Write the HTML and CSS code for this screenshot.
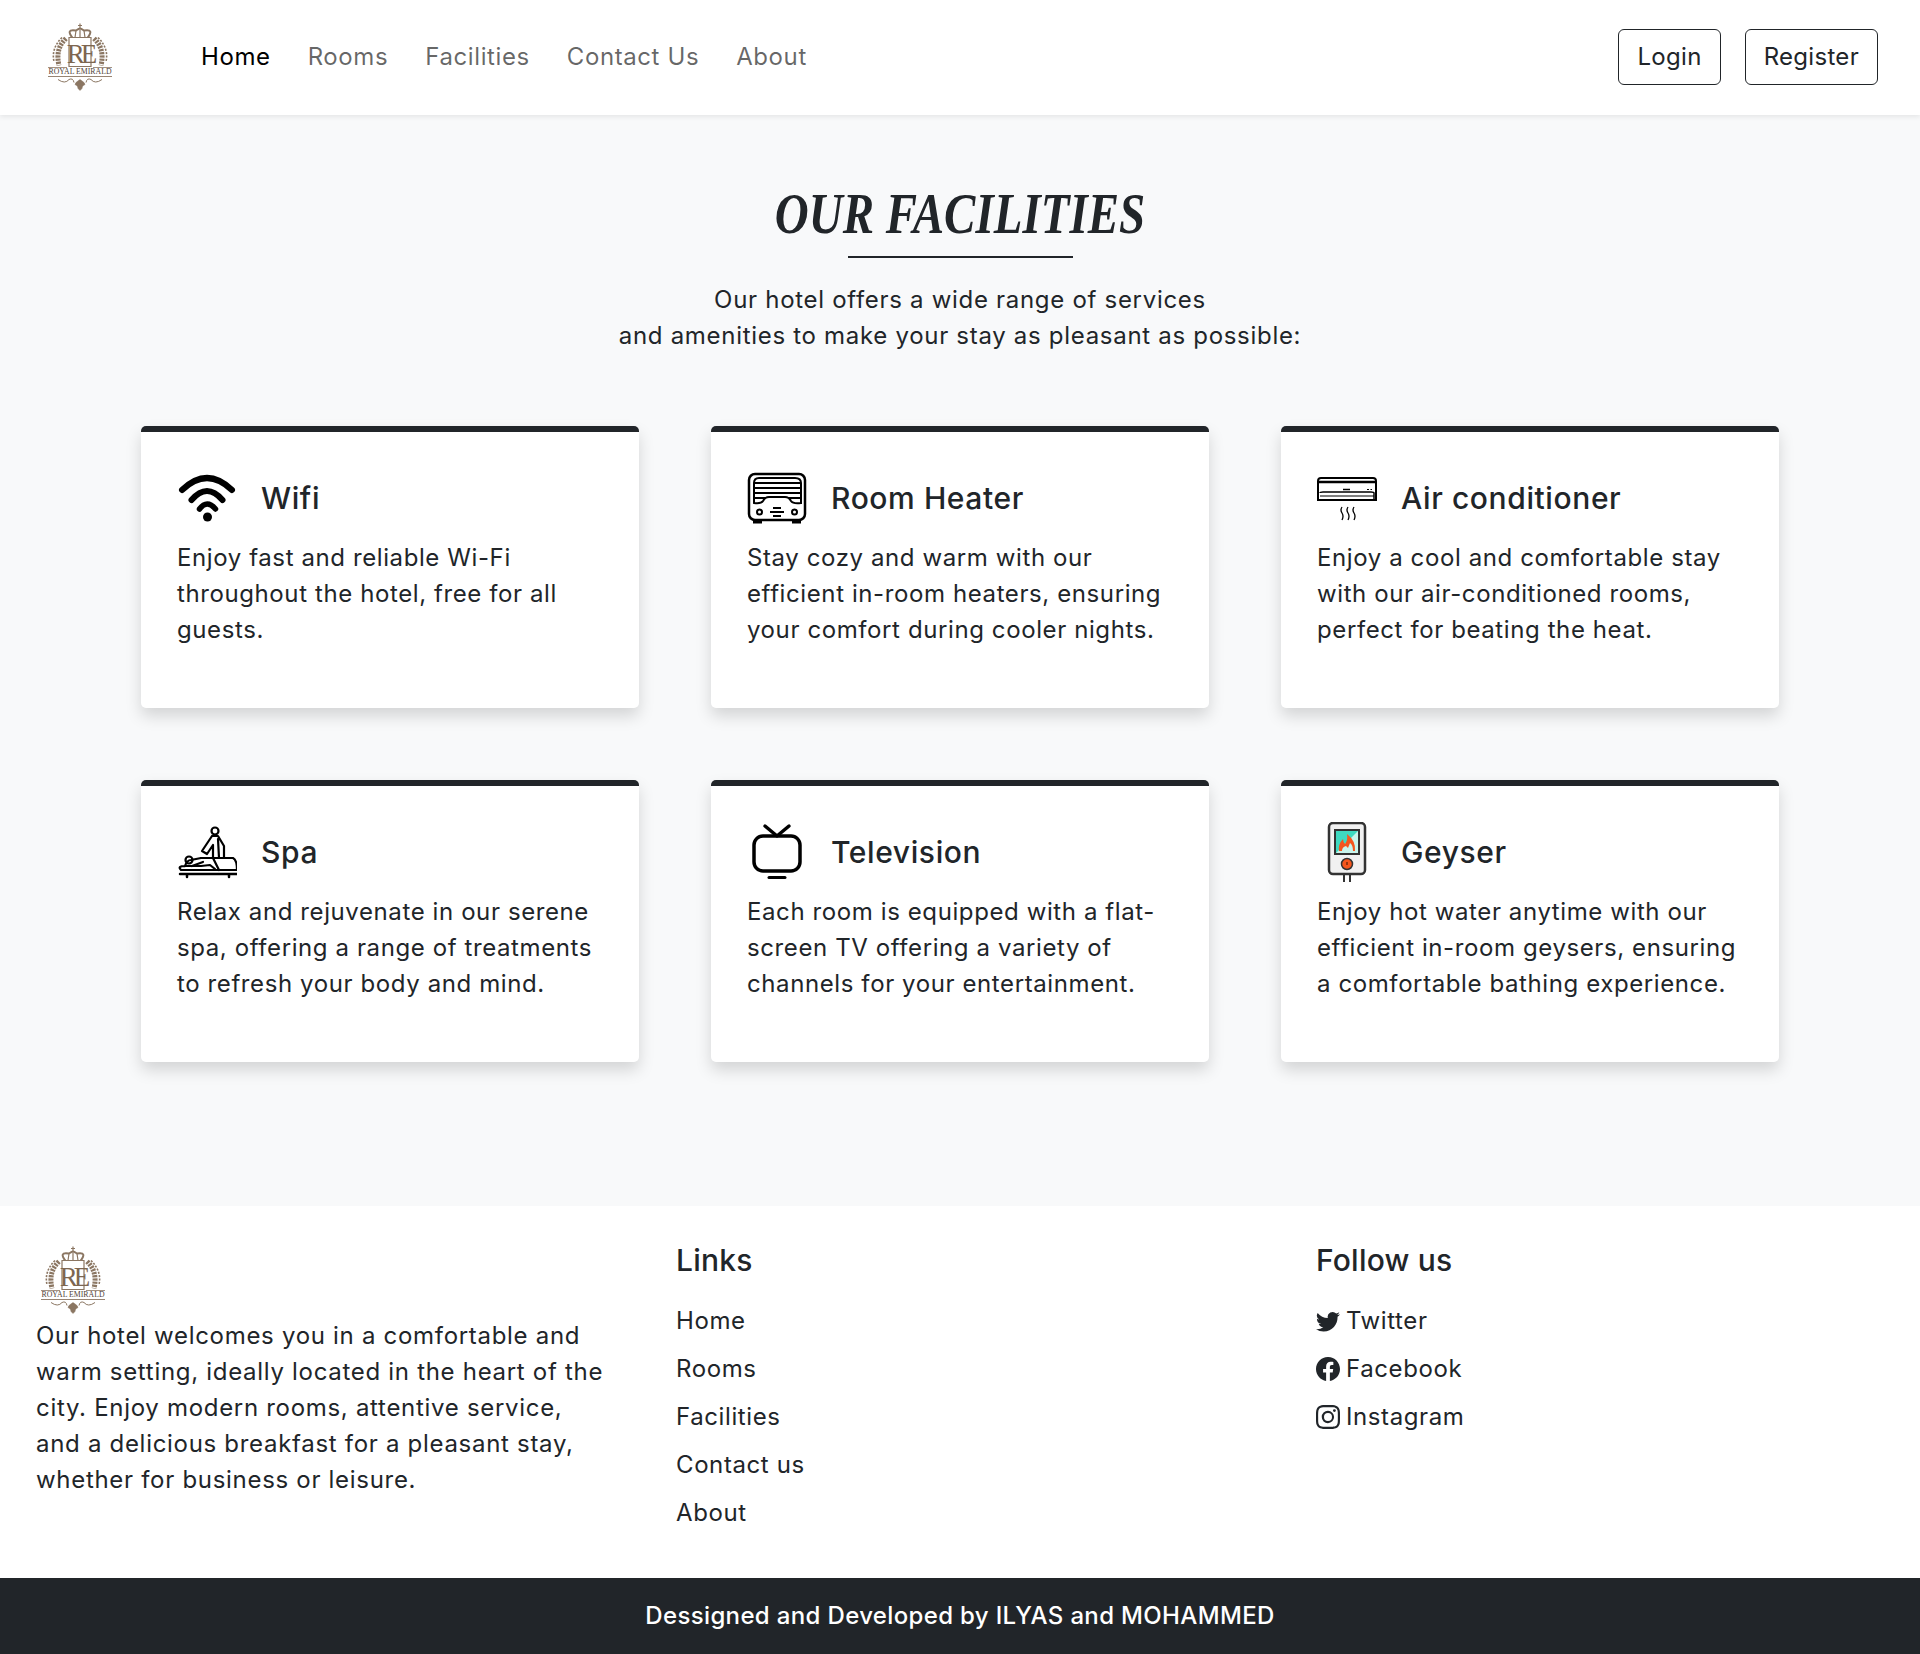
FILE: index.html
```html
<!DOCTYPE html>
<html lang="en">
<head>
<meta charset="utf-8">
<title>Royal Emirald - Facilities</title>
<link rel="stylesheet" href="styles.css">
</head>
<body>
<svg class="defs" width="0" height="0" aria-hidden="true">
  <symbol id="logo-art" viewBox="0 0 74 75">
    <g fill="none" stroke="#8b7662">
      <path d="M37 4 V10 M35 6 H39" stroke-width="1.200"/>
      <path d="M30 19 Q22 9 33 11 Q36 9 37 9 Q38 9 41 11 Q52 9 44 19 Z" fill="#fff" stroke-width="2"/>
      <path d="M33 11 L32 18 M41 11 L42 18 M37 10 V18" stroke-width="1.200"/>
      <path d="M29 18.500 H45" stroke-width="1.500"/>
      <path d="M26 18 H48 V47 H26 Z" stroke-width="1.200" fill="#fff"/>
      <path d="M23 19 Q12 29 16 46 M51 19 Q62 29 58 46" stroke-width="5" stroke-dasharray="2.200 1"/>
      <path d="M19 18 Q8 29 11 42 M55 18 Q66 29 63 42" stroke-width="1.600" stroke-dasharray="2 1.400"/>
      <path d="M5 48 H24 M50 48 H69" stroke-width=".8"/>
      <path d="M5 57 H69" stroke-width=".9"/>
      <path d="M15 60 Q22 65 26 60 Q30 58 31 63 M59 60 Q52 65 48 60 Q44 58 43 63" stroke-width="1"/>
      <path d="M37 60 Q42 63 42 65 Q39 66 39 69 L37 71 L35 69 Q35 66 32 65 Q32 63 37 60 Z" fill="#8b7662" stroke-width=".5"/>
    </g>
  </symbol>
</svg>

<header class="navbar">
  <a class="brand" href="#"><svg class="logo" viewBox="0 0 74 75"><use href="#logo-art"/><text class="logo-mono" x="37" y="43" text-anchor="middle">RE</text><text class="logo-name" x="37" y="54.500" text-anchor="middle" textLength="63" lengthAdjust="spacingAndGlyphs">ROYAL EMIRALD</text></svg></a>
  <nav class="nav-links">
    <a class="nav-link active" href="#">Home</a>
    <a class="nav-link" href="#">Rooms</a>
    <a class="nav-link" href="#">Facilities</a>
    <a class="nav-link" href="#">Contact Us</a>
    <a class="nav-link" href="#">About</a>
  </nav>
  <div class="nav-actions">
    <button class="btn">Login</button>
    <button class="btn">Register</button>
  </div>
</header>

<main class="page">
  <h1 class="title">OUR FACILITIES</h1>
  <div class="rule"></div>
  <p class="intro">Our hotel offers a wide range of services<br>and amenities to make your stay as pleasant as possible:</p>

  <section class="grid">
    <article class="card">
      <div class="card-head">
        <svg class="card-icon" viewBox="0 0 60 60"><g fill="none" stroke="#000" stroke-width="6" stroke-linecap="round"><path d="M5 22 Q30 -2 55 22"/><path d="M14.500 32 Q30 14 45.500 32"/><path d="M22.500 41 Q30 31 38.500 41" stroke-width="5.500"/></g><circle cx="30.500" cy="49" r="4.500"/></svg>
        <h2 class="card-title">Wifi</h2>
      </div>
      <p class="card-text">Enjoy fast and reliable Wi-Fi throughout the hotel, free for all guests.</p>
    </article>
    <article class="card">
      <div class="card-head">
        <svg class="card-icon" viewBox="0 0 60 60"><g fill="none" stroke="#000"><rect x="2" y="6" width="56" height="46" rx="6" stroke-width="2.500"/><path d="M12 10 H48 Q54 10 54 15 V35 Q46 36 44 33 Q42 29 38 29 H22 Q18 29 16 33 Q14 36 7 35 V15 Q7 10 12 10 Z" stroke-width="2"/><path d="M7 15 H54 M7 20 H54 M7 25 H54 M7 30 H19 M41 30 H54" stroke-width="2"/><circle cx="12.500" cy="44" r="2.500" stroke-width="2"/><circle cx="47.500" cy="44" r="2.500" stroke-width="2"/><path d="M26 40 H34 M23 44 H37 M26 48 H34" stroke-width="2"/><path d="M6 54 H15 M45 54 H54" stroke-width="3"/></g></svg>
        <h2 class="card-title">Room Heater</h2>
      </div>
      <p class="card-text">Stay cozy and warm with our efficient in-room heaters, ensuring your comfort during cooler nights.</p>
    </article>
    <article class="card">
      <div class="card-head">
        <svg class="card-icon" viewBox="0 0 60 60"><g fill="none" stroke="#000"><path d="M4 10 H56 Q59 10 59 13 V32 H1 V13 Q1 10 4 10 Z" stroke-width="2"/><path d="M1 14 H59" stroke-width="2.500"/><path d="M3 25 Q3 24 6 24 H54 Q57 24 57 25 V32" stroke-width="1.500"/><path d="M3 28 H57" stroke-width="1"/><path d="M26 21.500 H33" stroke-width="1.500"/><path d="M50 21.500 H52 M53.500 21.500 H55" stroke-width="1"/><path d="M25 39 Q23 42 25 45 Q27 48 25 52 M31 39 Q29 42 31 45 Q33 48 31 52 M37 39 Q35 42 37 45 Q39 48 37 52" stroke-width="1.300"/></g></svg>
        <h2 class="card-title">Air conditioner</h2>
      </div>
      <p class="card-text">Enjoy a cool and comfortable stay with our air-conditioned rooms, perfect for beating the heat.</p>
    </article>
    <article class="card">
      <div class="card-head">
        <svg class="card-icon" viewBox="0 0 60 60"><g fill="none" stroke="#000" stroke-width="2.200" stroke-linejoin="round" stroke-linecap="round"><circle cx="38" cy="9" r="3.500"/><path d="M35 14 H41 L47 24 V35 M35 14 L25 29 L30 32 L36 23 L36 36 M41 17 L42 36"/><path d="M8 44 Q10 38 14 38 L24 36 H56 Q60 38 60 48 H4 Q0 44 8 44 L24 44 L33 43 L38 47"/><circle cx="12" cy="38" r="3.500"/><path d="M24 36 L36 36 L42 48 M15 44 L26 40"/><path d="M3 52 H60 M10 52 V55 M52 52 V55" stroke-width="2.500"/></g></svg>
        <h2 class="card-title">Spa</h2>
      </div>
      <p class="card-text">Relax and rejuvenate in our serene spa, offering a range of treatments to refresh your body and mind.</p>
    </article>
    <article class="card">
      <div class="card-head">
        <svg class="card-icon" viewBox="0 0 60 60"><g fill="none" stroke="#000" stroke-width="3.500" stroke-linecap="round" stroke-linejoin="round"><rect x="7" y="14" width="46" height="35" rx="9"/><path d="M18 4 L30 14 L42 4"/><path d="M22 55.500 H38" stroke-width="3"/></g></svg>
        <h2 class="card-title">Television</h2>
      </div>
      <p class="card-text">Each room is equipped with a flat-screen TV offering a variety of channels for your entertainment.</p>
    </article>
    <article class="card">
      <div class="card-head">
        <svg class="card-icon" viewBox="0 0 60 60"><rect x="12" y="1" width="36" height="51" rx="4" fill="#f1f1f1" stroke="#333" stroke-width="2.500"/><path d="M27 52 V60 M33 52 V60" stroke="#333" stroke-width="2"/><rect x="18" y="8" width="24" height="24" fill="#3ed9c0"/><path d="M18 32 L42 8 V32 Z" fill="#c9f5ec"/><path d="M22 29 Q21 22 26 17 Q26 20 28 22 Q31 18 30 12 Q39 19 38 29 L36 29 Q36 23 33 21 L31 26 L29 24 Q25 25 25 29 Z" fill="#f5561d"/><rect x="18" y="8" width="24" height="24" fill="none" stroke="#333" stroke-width="2"/><circle cx="30" cy="42" r="5.500" fill="#f5561d" stroke="#333" stroke-width="1.500"/><path d="M30 40 V43" stroke="#7a2a0a" stroke-width="1.500"/></svg>
        <h2 class="card-title">Geyser</h2>
      </div>
      <p class="card-text">Enjoy hot water anytime with our efficient in-room geysers, ensuring a comfortable bathing experience.</p>
    </article>
  </section>
</main>

<footer class="footer">
  <div class="footer-col">
    <svg class="logo footer-logo" viewBox="0 0 74 75"><use href="#logo-art"/><text class="logo-mono" x="37" y="43" text-anchor="middle">RE</text><text class="logo-name" x="37" y="54.500" text-anchor="middle" textLength="63" lengthAdjust="spacingAndGlyphs">ROYAL EMIRALD</text></svg>
    <p class="footer-text">Our hotel welcomes you in a comfortable and warm setting, ideally located in the heart of the city. Enjoy modern rooms, attentive service, and a delicious breakfast for a pleasant stay, whether for business or leisure.</p>
  </div>
  <div class="footer-col">
    <h3 class="footer-title">Links</h3>
    <ul class="footer-list">
      <li><a href="#">Home</a></li>
      <li><a href="#">Rooms</a></li>
      <li><a href="#">Facilities</a></li>
      <li><a href="#">Contact us</a></li>
      <li><a href="#">About</a></li>
    </ul>
  </div>
  <div class="footer-col">
    <h3 class="footer-title">Follow us</h3>
    <ul class="footer-list">
      <li><a href="#"><svg class="social" viewBox="0 0 16 16"><path d="M5.026 15c6.038 0 9.341-5.003 9.341-9.334 0-.14 0-.282-.006-.422A6.685 6.685 0 0 0 16 3.542a6.658 6.658 0 0 1-1.889.518 3.301 3.301 0 0 0 1.447-1.817 6.533 6.533 0 0 1-2.087.793A3.286 3.286 0 0 0 7.875 6.03a9.325 9.325 0 0 1-6.767-3.429 3.289 3.289 0 0 0 1.018 4.382A3.323 3.323 0 0 1 .64 6.575v.045a3.288 3.288 0 0 0 2.632 3.218 3.203 3.203 0 0 1-.865.115 3.23 3.23 0 0 1-.614-.057 3.283 3.283 0 0 0 3.067 2.277A6.588 6.588 0 0 1 .78 13.58a6.32 6.32 0 0 1-.78-.045A9.344 9.344 0 0 0 5.026 15z"/></svg>Twitter</a></li>
      <li><a href="#"><svg class="social" viewBox="0 0 16 16"><path d="M16 8.049c0-4.446-3.582-8.05-8-8.05C3.58 0-.002 3.603-.002 8.05c0 4.017 2.926 7.347 6.75 7.951v-5.625h-2.03V8.05H6.75V6.275c0-2.017 1.195-3.131 3.022-3.131.876 0 1.791.157 1.791.157v1.98h-1.009c-.993 0-1.303.621-1.303 1.258v1.51h2.218l-.354 2.326H9.25V16c3.824-.604 6.75-3.934 6.75-7.951z"/></svg>Facebook</a></li>
      <li><a href="#"><svg class="social" viewBox="0 0 16 16"><path d="M8 0C5.829 0 5.556.01 4.703.048 3.85.088 3.269.222 2.76.42a3.917 3.917 0 0 0-1.417.923A3.927 3.927 0 0 0 .42 2.76C.222 3.268.087 3.85.048 4.7.01 5.555 0 5.827 0 8.001c0 2.172.01 2.444.048 3.297.04.852.174 1.433.372 1.942.205.526.478.972.923 1.417.444.445.89.719 1.416.923.51.198 1.09.333 1.942.372C5.555 15.99 5.827 16 8 16s2.444-.01 3.298-.048c.851-.04 1.434-.174 1.943-.372a3.916 3.916 0 0 0 1.416-.923c.445-.445.718-.891.923-1.417.197-.509.332-1.09.372-1.942C15.99 10.445 16 10.173 16 8s-.01-2.445-.048-3.299c-.04-.851-.175-1.433-.372-1.941a3.926 3.926 0 0 0-.923-1.417A3.911 3.911 0 0 0 13.24.42c-.51-.198-1.092-.333-1.943-.372C10.443.01 10.172 0 7.998 0h.003zm-.717 1.442h.718c2.136 0 2.389.007 3.232.046.78.035 1.204.166 1.486.275.373.145.64.319.92.599.28.28.453.546.598.92.11.281.24.705.275 1.485.039.843.047 1.096.047 3.231s-.008 2.389-.047 3.232c-.035.78-.166 1.203-.275 1.485a2.47 2.47 0 0 1-.599.919c-.28.28-.546.453-.92.598-.28.11-.704.24-1.485.276-.843.038-1.096.047-3.232.047s-2.39-.009-3.233-.047c-.78-.036-1.203-.166-1.485-.276a2.478 2.478 0 0 1-.92-.598 2.48 2.48 0 0 1-.6-.92c-.109-.281-.24-.705-.275-1.485-.038-.843-.046-1.096-.046-3.233 0-2.136.008-2.388.046-3.231.036-.78.166-1.204.276-1.486.145-.373.319-.64.599-.92.28-.28.546-.453.92-.598.282-.11.705-.24 1.485-.276.738-.034 1.024-.044 2.515-.045v.002zm4.988 1.328a.96.96 0 1 0 0 1.92.96.96 0 0 0 0-1.92zm-4.27 1.122a4.109 4.109 0 1 0 0 8.217 4.109 4.109 0 0 0 0-8.217zm0 1.441a2.667 2.667 0 1 1 0 5.334 2.667 2.667 0 0 1 0-5.334z"/></svg>Instagram</a></li>
    </ul>
  </div>
</footer>
<div class="credit">Dessigned and Developed by ILYAS and MOHAMMED</div>
</body>
</html>
```
FILE: styles.css
```css
* { box-sizing: border-box; }
html, body { margin: 0; padding: 0; }
body {
  font-family: "Inter", "Open Sans", sans-serif;
  font-size: 24px;
  line-height: 36px;
  letter-spacing: .6px;
  color: #212529;
  background: #f8f9fa;
}
a { color: inherit; text-decoration: none; }
.defs { position: absolute; }

.navbar {
  display: flex;
  align-items: center;
  height: 115px;
  padding: 0 42px 2px 43px;
  background: #fff;
  box-shadow: 0 2px 5px rgba(0, 0, 0, .08);
  position: relative;
}
.brand { display: flex; width: 158px; }
.logo { display: block; width: 74px; height: 76px; }
.nav-links { display: flex; gap: 37px; }
.nav-link { letter-spacing: .6px; color: rgba(0, 0, 0, .6); }
.nav-link.active { color: #000; }
.nav-actions { display: flex; gap: 24px; margin-left: auto; }
.btn {
  height: 56px;
  padding: 0 18px;
  font: inherit;
  letter-spacing: .3px;
  color: #212529;
  background: transparent;
  border: 1.500px solid #212529;
  border-radius: 6px;
}
.logo-mono { font-family: "Liberation Serif", serif; font-size: 27px; letter-spacing: -4px; fill: #7d6650; }
.logo-name { font-family: "Liberation Serif", serif; font-size: 7.500px; letter-spacing: 0; fill: #4f4237; }

.page { padding: 60px 141px 144px; }
.title {
  margin: 0;
  font-family: "Liberation Serif", serif;
  font-style: italic;
  font-weight: 700;
  font-size: 58px;
  line-height: 78px;
  letter-spacing: 0;
  text-align: center;
  transform: scaleX(.81);
}
.rule { width: 225px; height: 2px; margin: 3px auto 24px; background: #212529; }
.intro { margin: 0 0 72px; text-align: center; letter-spacing: .7px; }

.grid { display: grid; grid-template-columns: repeat(3, 1fr); gap: 72px; }
.card {
  height: 282px;
  padding: 36px 36px 0;
  background: #fff;
  border-top: 6px solid #212529;
  border-radius: 5px;
  box-shadow: 0 8px 16px rgba(0, 0, 0, .15);
}
.card-head { display: flex; align-items: center; gap: 24px; margin-bottom: 12px; }
.card-icon { width: 60px; height: 60px; flex: none; display: block; }
.card-title { margin: 0; font-size: 30px; font-weight: 500; line-height: 36px; letter-spacing: .6px; }
.card-text { margin: 0; }

.footer {
  display: grid;
  grid-template-columns: repeat(3, 1fr);
  height: 372px;
  padding-top: 36px;
  background: #fff;
}
.footer-col { padding: 0 36px; }
.footer-text { margin: 0; letter-spacing: .7px; }
.footer-title { margin: 0 0 25px; font-size: 30px; font-weight: 500; line-height: 36px; letter-spacing: .2px; }
.footer-list { margin: 0; padding: 0; list-style: none; display: flex; flex-direction: column; gap: 12px; }
.social { width: 24px; height: 24px; margin-right: 6px; vertical-align: -4px; fill: #212529; }
.credit {
  height: 76px;
  display: flex;
  align-items: center;
  justify-content: center;
  font-weight: 500;
  letter-spacing: .35px;
  color: #fff;
  background: #212529;
}
```
